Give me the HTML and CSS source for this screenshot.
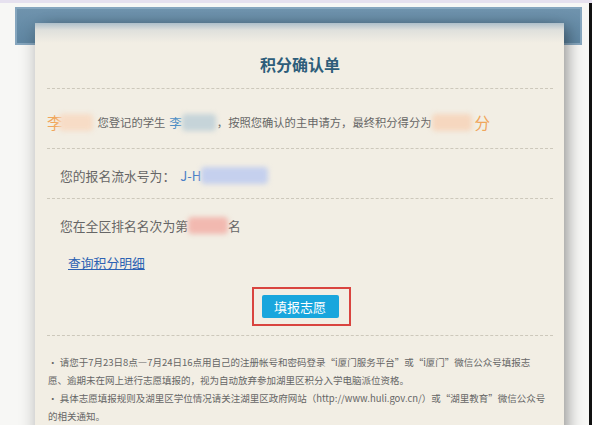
FILE: index.html
```html
<!DOCTYPE html>
<html lang="zh-CN">
<head>
<meta charset="utf-8">
<title>积分确认单</title>
<link rel="stylesheet" href="styles.css">
</head>
<body>
<div class="topline"></div>
<div class="page">
  <div class="band"></div>
  <div class="card">
    <div class="sec sec-title"><h1 class="title">积分确认单</h1></div>
    <div class="sec sec-r1">
      <p class="r1"><span class="big orange">李</span><span class="blob b-peach1"></span><span class="gray">您登记的学生</span><span class="blue-s">李</span><span class="blob b-blue1"></span><span class="gray">，按照您确认的主申请方，最终积分得分为</span><span class="blob b-peach2"></span><span class="big orange">分</span></p>
    </div>
    <div class="sec sec-r2">
      <p class="r2"><span class="gray">您的报名流水号为：</span><span class="serial">J-H</span><span class="blob b-blue2"></span></p>
    </div>
    <div class="sec sec-r3">
      <p class="r3"><span class="gray">您在全区排名名次为第</span><span class="blob b-pink"></span><span class="gray">名</span></p>
      <p class="linkrow"><a class="link" href="#">查询积分明细</a></p>
      <div class="btnrow"><span class="redbox"><span class="btn">填报志愿</span></span></div>
    </div>
    <div class="sec sec-notes">
      <p class="note">• 请您于7月23日8点—7月24日16点用自己的注册帐号和密码登录“i厦门服务平台”或“i厦门”微信公众号填报志<br>愿、逾期未在网上进行志愿填报的，视为自动放弃参加湖里区积分入学电脑派位资格。</p>
      <p class="note">• 具体志愿填报规则及湖里区学位情况请关注湖里区政府网站（http://www.huli.gov.cn/）或“湖里教育”微信公众号<br>的相关通知。</p>
    </div>
  </div>
</div>
</body>
</html>
```

FILE: styles.css
```css
html, body {
  margin: 0;
  padding: 0;
  height: 100%;
  overflow: hidden;
}
body {
  background: #f7f7f5;
  font-family: "Noto Sans CJK SC", "Microsoft YaHei", sans-serif;
  color: #666;
}
.topline {
  height: 3px;
  background: #e6e1ef;
}
.page {
  padding: 4px 7px 0 15px;
  border-right: 3px solid #111;
  min-height: 430px;
  box-sizing: border-box;
}
.band {
  height: 38px;
  background: linear-gradient(to bottom, #6f93ad, #5f86a2);
  border: 2px solid #86a6be;
  box-sizing: border-box;
}
.card {
  position: relative;
  margin: -22px 18px 0 20px;
  padding: 0 11px 40px 12px;
  background: linear-gradient(to bottom, #aebfca 0, #dfe0dc 7px, #f2eee4 20px, #f2eee4 100%);
  box-shadow: 8px 0 14px -4px rgba(0, 0, 0, 0.38), -6px 0 14px -4px rgba(0, 0, 0, 0.18);
}
.sec {
  border-bottom: 1px dashed #cdc8bb;
}
.sec-notes { border-bottom: none; }
.sec-title {
  padding: 30px 0 13px;
}
.title {
  margin: 0;
  text-align: center;
  font-size: 16px;
  line-height: 22px;
  font-weight: bold;
  color: #2d5d7a;
}
.sec-r1 { padding: 21px 0 14px; }
.sec-r2 { padding: 16px 0 13px; }
.sec-r3 { padding: 16px 0 9px; }
.sec-notes { padding: 17px 0 0; }
p { margin: 0; }
.r1 {
  display: flex;
  align-items: center;
  height: 24px;
  font-size: 11.3px;
  white-space: nowrap;
}
.big {
  font-size: 15.5px;
  line-height: 24px;
}
.orange { color: #f0a65c; }
.gray { color: #666; }
.blue-s {
  color: #4d8fc4;
  font-size: 12.5px;
  margin-left: 4px;
}
.blob {
  display: inline-block;
  height: 17px;
  border-radius: 4px;
  filter: blur(2.5px);
}
.b-peach1 { width: 34px; background: #f7dcc6; margin: 0 5px 0 -4px; }
.b-blue1 { width: 34px; background: #c6d4d9; margin-right: 1px; }
.b-peach2 { width: 40px; background: #f6d7bf; margin: 0 2px 0 1px; }
.r2, .r3 {
  display: flex;
  align-items: center;
  height: 20px;
  padding-left: 13px;
  font-size: 12.8px;
  white-space: nowrap;
}
.serial {
  color: #4a7ec6;
  font-size: 13px;
  margin-left: 5px;
}
.b-blue2 { width: 67px; background: #c5d0ee; }
.b-pink { width: 40px; background: #f2b9b0; }
.linkrow {
  margin-top: 18px;
  padding-left: 21px;
  height: 20px;
  line-height: 20px;
  font-size: 12.8px;
}
.link {
  color: #2d62b3;
  text-decoration: underline;
}
.btnrow {
  margin-top: 14px;
  display: flex;
  justify-content: center;
}
.redbox {
  display: inline-flex;
  padding: 6px 10px 6px 8px;
  border: 2px solid #d9443f;
  margin-left: 2px;
}
.btn {
  display: inline-block;
  width: 77px;
  height: 23px;
  line-height: 23px;
  text-align: center;
  background: #19a6dd;
  color: #fff;
  font-size: 13px;
  border-radius: 2px;
}
.note {
  font-size: 9.5px;
  line-height: 18px;
  color: #666;
  padding-left: 1px;
  white-space: nowrap;
}
```
